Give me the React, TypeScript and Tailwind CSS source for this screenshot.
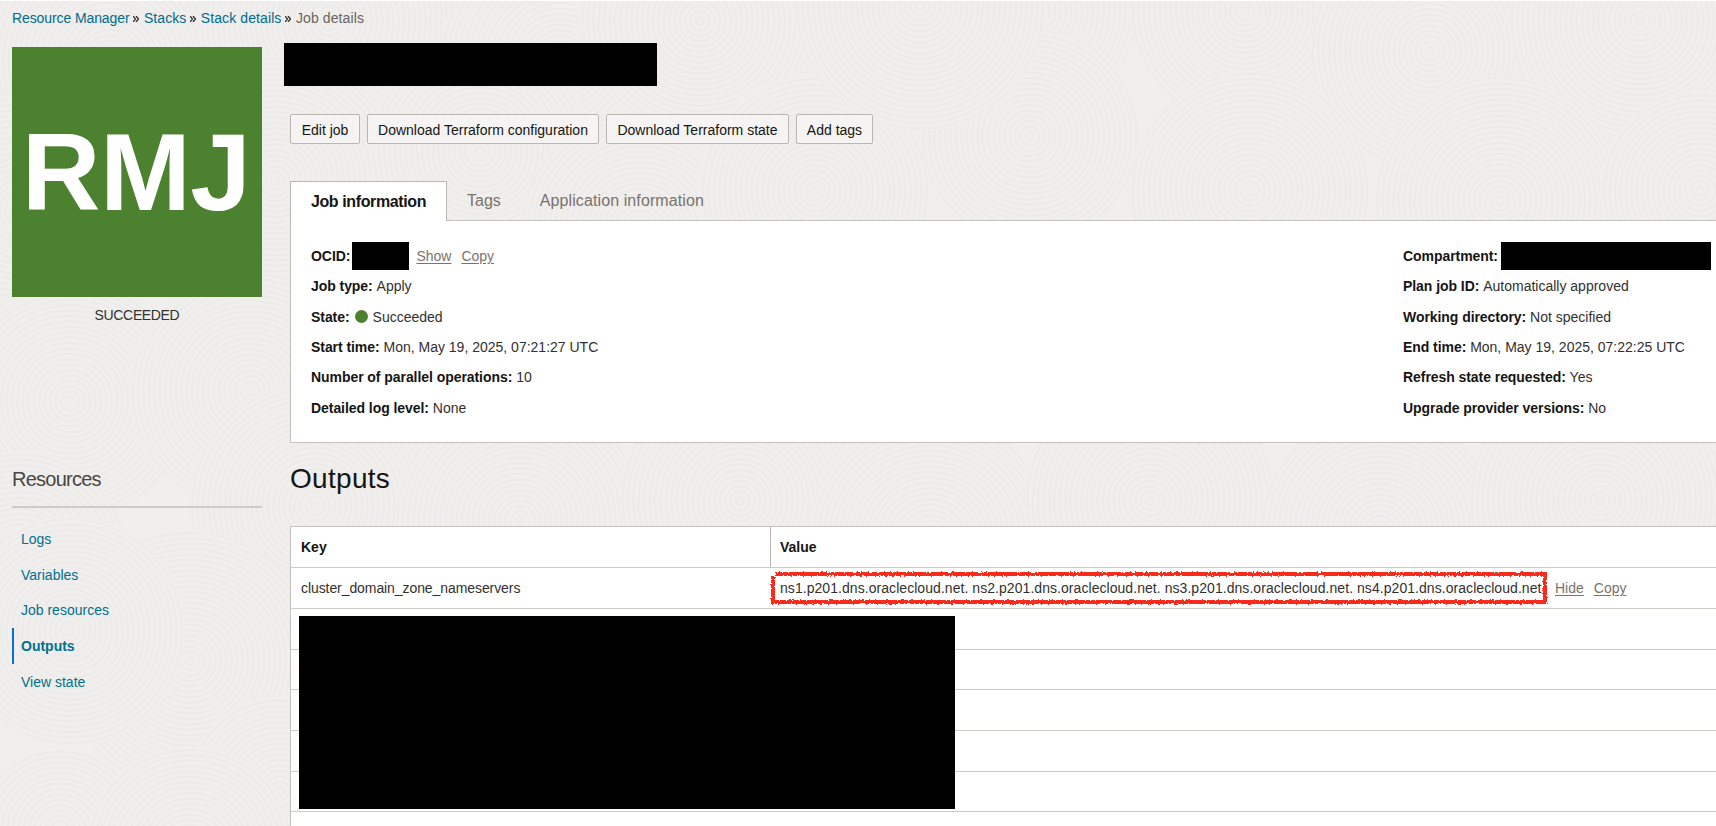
import { Fragment } from 'react';
import type { ReactNode } from 'react';

const crumbs = [
  { label: 'Resource Manager', tracking: 'tracking-[-0.1px]' },
  { label: 'Stacks', tracking: 'tracking-[0.05px]' },
  { label: 'Stack details', tracking: 'tracking-[0.1px]' },
];
const actions = [
  { label: 'Edit job', width: 'w-[70px]' },
  { label: 'Download Terraform configuration', width: 'w-[232px]' },
  { label: 'Download Terraform state', width: 'w-[183px]' },
  { label: 'Add tags', width: 'w-[77px]' },
];
const resources = ['Logs', 'Variables', 'Job resources', 'Outputs', 'View state'];
const nameservers =
  'ns1.p201.dns.oraclecloud.net. ns2.p201.dns.oraclecloud.net. ns3.p201.dns.oraclecloud.net. ns4.p201.dns.oraclecloud.net';

// x, y, radius of each swirl in the page texture, painted back to front
const swirls = [
  [110, 60, 125], [330, 20, 130], [560, 60, 120], [700, 20, 120], [1035, 10, 105], [1245, 10, 115],
  [1430, 50, 120], [1640, 20, 130], [20, 210, 120], [275, 180, 125], [480, 150, 110], [640, 230, 120],
  [815, 190, 118], [1030, 135, 108], [920, 5, 125], [1250, 190, 120], [1500, 200, 125], [1700, 190, 100],
  [70, 400, 120], [250, 390, 120], [315, 505, 125], [520, 520, 125], [740, 500, 120], [930, 540, 125],
  [1150, 500, 125], [1380, 530, 120], [1600, 500, 130], [20, 560, 110], [190, 660, 130], [70, 630, 115],
  [280, 790, 95], [60, 830, 85], [190, 850, 105],
];

function Texture() {
  return (
    <svg className="absolute inset-0 -z-10 h-full w-full" aria-hidden="true">
      {swirls.map(([x, y, r]) => (
        <g key={`${x}-${y}`} fill="none" stroke="#ecebe9" strokeWidth="2">
          <circle cx={x} cy={y} r={r} fill="#f0efed" stroke="none" />
          {Array.from({ length: Math.floor(r / 5.4) }, (_, i) => (
            <circle key={i} cx={x} cy={y} r={5.4 * i + 4} />
          ))}
        </g>
      ))}
    </svg>
  );
}

function Redacted({ className }: { className: string }) {
  return <span className={`block shrink-0 bg-black ${className}`} />;
}

function Field({ label, children }: { label: string; children?: ReactNode }) {
  return (
    <div className="flex h-[30.3px] items-center whitespace-nowrap">
      <span className="font-bold tracking-[-0.06px] text-[#161513]">{label}:</span>
      {children}
    </div>
  );
}

function TextLink({ children, className = '' }: { children: ReactNode; className?: string }) {
  return <a className={`text-[#7b726c] underline underline-offset-2 ${className}`}>{children}</a>;
}

function Marker() {
  return (
    <svg className="pointer-events-none absolute left-0 top-[2px] h-[36px] w-[780px] overflow-visible" fill="none">
      <filter id="rough" x="-2%" y="-20%" width="104%" height="140%">
        <feTurbulence type="fractalNoise" baseFrequency="0.45" numOctaves="2" seed="4" />
        <feDisplacementMap in="SourceGraphic" scale="3.5" xChannelSelector="R" yChannelSelector="G" />
      </filter>
      <path d="M5 4H775V32H3V6" stroke="#fa2a1c" strokeWidth="4" filter="url(#rough)" />
    </svg>
  );
}

export default function App() {
  return (
    <div className="relative isolate flex h-[826px] w-[1716px] flex-col overflow-hidden border-t border-white bg-[#f0efed] pl-3 font-['Liberation_Sans',Arial,sans-serif] text-[14px] leading-5 text-[#33302d]">
      <Texture />
      <nav className="flex h-[34px] shrink-0 items-center whitespace-nowrap">
        {crumbs.map(({ label, tracking }) => (
          <Fragment key={label}>
            <a className={`text-[#006b8f] ${tracking}`}>{label}</a>
            <svg className="ml-1 mr-[4.5px] mt-px h-[6px] w-[6px]" viewBox="0 0 6 6" fill="none" stroke="#33302d" strokeWidth="1.3">
              <path d="M0 0L2.5 3L0 6M3 0L5.5 3L3 6" />
            </svg>
          </Fragment>
        ))}
        <span className="tracking-[0.1px] text-[#6b645f]">Job details</span>
      </nav>

      <div className="flex flex-1">
        <aside className="w-[250px] shrink-0 pt-3">
          <div className="flex h-[250px] items-center justify-center bg-[#4b812f] pr-[2px] text-[109px] font-bold tracking-[-0.5px] text-white">
            RMJ
          </div>
          <p className="mt-2 text-center tracking-[-0.35px] text-[#33302d]">SUCCEEDED</p>
          <h2 className="mt-[141px] border-b-2 border-[#cfcbc5] pb-[14px] text-[20px] leading-[26px] tracking-[-0.75px] text-[#4a4642]">
            Resources
          </h2>
          <ul className="mt-[13px]">
            {resources.map((item) => (
              <li
                key={item}
                className={`flex h-[35.7px] items-center border-l-2 pl-[7px] text-[#00708f] ${
                  item === 'Outputs' ? 'border-[#0572ce] font-bold text-[#00648a]' : 'border-transparent'
                }`}
              >
                {item}
              </li>
            ))}
          </ul>
        </aside>

        <main className="ml-[28px] flex-1 pt-2">
          <Redacted className="-ml-[6px] h-[43px] w-[373px]" />
          <div className="mt-7 flex gap-[7px]">
            {actions.map(({ label, width }) => (
              <button key={label} className={`${width} h-[30px] whitespace-nowrap rounded-[2px] border border-[#bcb6b1] bg-[#f5f4f2] pt-px text-[#161513]`}>
                {label}
              </button>
            ))}
          </div>

          <div className="relative z-10 mt-[37px] flex h-10 items-center text-[16px] text-[#7b726c]">
            <div className="flex h-10 w-[157px] items-center justify-center border border-b-0 border-[#bcb6b1] bg-white font-bold tracking-[-0.38px] text-[#161513]">
              Job information
            </div>
            <span className="ml-5">Tags</span>
            <span className="ml-[39px] tracking-[0.1px]">Application information</span>
          </div>
          <section className="-mt-px flex h-[223px] border-y border-l border-[#c5c1bc] bg-white pl-5 pt-5">
            <div className="w-[1092px] shrink-0">
              <Field label="OCID">
                <Redacted className="ml-[2px] h-7 w-[57px]" />
                <TextLink className="ml-[7px]">Show</TextLink>
                <TextLink className="ml-[10px]">Copy</TextLink>
              </Field>
              <Field label="Job type">&nbsp;Apply</Field>
              <Field label="State">
                <span className="ml-[5px] mr-[5px] h-[13px] w-[13px] rounded-full bg-[#4b812f]" />
                Succeeded
              </Field>
              <Field label="Start time">&nbsp;Mon, May 19, 2025, 07:21:27 UTC</Field>
              <Field label="Number of parallel operations">&nbsp;10</Field>
              <Field label="Detailed log level">&nbsp;None</Field>
            </div>
            <div>
              <Field label="Compartment">
                <Redacted className="ml-[3px] h-7 w-[210px]" />
              </Field>
              <Field label="Plan job ID">&nbsp;Automatically approved</Field>
              <Field label="Working directory">&nbsp;Not specified</Field>
              <Field label="End time">&nbsp;Mon, May 19, 2025, 07:22:25 UTC</Field>
              <Field label="Refresh state requested">&nbsp;Yes</Field>
              <Field label="Upgrade provider versions">&nbsp;No</Field>
            </div>
          </section>

          <h1 className="mt-[18px] text-[28px] leading-9 tracking-[0.3px] text-[#161513]">Outputs</h1>
          <div className="relative mt-[29px] border-l border-t border-[#c5c1bc] bg-white">
            <div className="flex h-[41px] items-center border-b border-[#cfcbc7] font-bold text-[#161513]">
              <div className="w-[479px] pl-[10px]">Key</div>
              <div className="flex h-full items-center border-l border-[#bcb6b1] pl-[9px]">Value</div>
            </div>
            <div className="flex h-[41px] items-center border-b border-[#cfcbc7]">
              <div className="w-[479px] pl-[10px] tracking-[-0.08px]">cluster_domain_zone_nameservers</div>
              <div className="relative flex h-full items-center whitespace-nowrap pl-[10px]">
                <span className="w-[775px] tracking-[0.055px]">{nameservers}</span>
                <Marker />
                <TextLink>Hide</TextLink>
                <TextLink className="ml-[10px]">Copy</TextLink>
              </div>
            </div>
            {[0, 1, 2, 3, 4].map((row) => (
              <div key={row} className="h-[40.7px] border-b border-[#cfcbc7]" />
            ))}
            <div className="h-10" />
            <Redacted className="absolute left-2 top-[89px] h-[193px] w-[656px]" />
          </div>
        </main>
      </div>
    </div>
  );
}
